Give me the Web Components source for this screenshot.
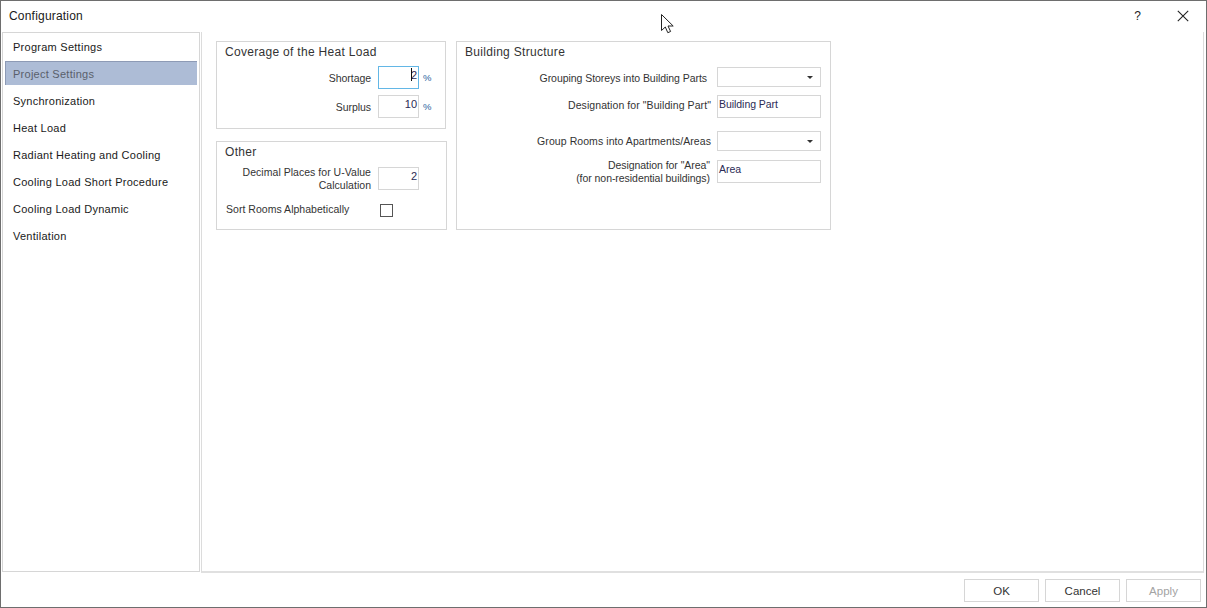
<!DOCTYPE html>
<html><head><meta charset="utf-8"><style>
html,body{margin:0;padding:0;background:#fff}
body{width:1207px;height:608px;overflow:hidden;font-family:"Liberation Sans",sans-serif}
</style></head><body>
<config-window></config-window>
<script>
const FONT='"Liberation Sans","Noto Sans",sans-serif';
function def(name,css,html){
  customElements.define(name,class extends HTMLElement{
    constructor(){super();const s=this.attachShadow({mode:'open'});
      s.innerHTML='<style>'+css+'</style>'+(typeof html==='function'?html(this):html);}
  });
}
def('nav-item',`:host{display:flex;align-items:center;height:24px;margin-bottom:3px;padding:1px 0 0 8px;font-size:11px;letter-spacing:.26px;color:#1a1a1a;box-sizing:border-box}
:host([selected]){background:#adbcd6;color:#5a5f6b;border-top:1px solid #8d9ab5;border-left:1px solid #8d9ab5;padding:0 0 0 7px}`,'<slot></slot>');
def('group-box',`:host{display:block;box-sizing:border-box;border:1px solid #d6d6d6}
.t{font-size:12px;letter-spacing:.3px;color:#333;line-height:16px;padding:2px 0 0 8px;height:18px;box-sizing:border-box}`,
  h=>'<div class="t">'+h.getAttribute('title-text')+'</div><slot></slot>');
def('form-row',`:host{display:grid;grid-template-rows:minmax(0,1fr);align-items:center;font-size:10.5px;letter-spacing:-.05px;color:#333;line-height:13px}
.l{text-align:right;white-space:pre-line;letter-spacing:var(--ls,-.05px);padding:var(--lt,0px) var(--lp,0px) var(--lb,0px) 0}`,
  h=>'<div class="l">'+h.getAttribute('label')+'</div><slot></slot>');
def('text-box',`:host{display:block;align-self:stretch;box-sizing:border-box;border:1px solid #d6d6d6;background:#fff;font-size:10.5px;letter-spacing:-.05px;line-height:13px;color:#2b2b55;padding:2px 1px;position:relative;overflow:hidden}
:host([num]){text-align:right;padding:2px 1px 0;font-size:11px}
:host([focus]){border-color:#63b7e6}
:host([focus])::after{content:"";position:absolute;right:6px;top:1px;width:1px;height:13px;background:#111}`,'<slot></slot>');
def('drop-box',`:host{display:flex;align-self:stretch;align-items:center;justify-content:flex-end;box-sizing:border-box;border:1px solid #d6d6d6;background:#fff;padding-right:7px}
i{display:block;width:0;height:0;border:3px solid transparent;border-top:3px solid #333;border-bottom:0}`,'<i></i>');
def('dlg-button',`:host{display:flex;align-items:center;justify-content:center;width:75px;height:23px;box-sizing:border-box;border:1px solid #d6d6d6;background:#fff;font-size:11.5px;color:#333}
:host([disabled]){color:#a3a3a3}`,'<slot></slot>');
def('config-window',`
:host{display:flex;flex-direction:column;width:1207px;height:608px;box-sizing:border-box;border:1px solid #6e6e6e;background:#fff;position:relative;color:#222;font-family:${FONT}}
.title{height:31px;flex:none;display:flex;align-items:center;padding:0 17px 1px 8px;box-sizing:border-box;font-size:12px;letter-spacing:.2px;color:#1a1a1a}
.title .s{flex:1}
.help{font-size:12px;margin-right:36px;color:#222}
.main{flex:1;display:flex;min-height:0;padding-left:1px}
.side{width:198px;flex:none;box-sizing:border-box;border:1px solid #d6d6d6;padding:1px 2px 0 2px;height:540px}
.content{margin-left:1px;flex:none;width:1003px;height:541px;box-sizing:border-box;border-left:1px solid #dcdcdc;border-right:1px solid #dcdcdc;border-bottom:2px solid #e0e0e0;padding:9px 0 0 14px;display:grid;grid-template-columns:231px 375px;column-gap:9px;grid-template-rows:88px 89px;row-gap:12px;align-content:start}
.b3{grid-row:1/3;grid-column:2}
.g1{width:230px}
.foot{height:34px;flex:none;display:flex;justify-content:flex-end;gap:6px;padding:6px 5px 0 0;box-sizing:border-box}
.cursor{position:absolute;left:659px;top:12px;width:14px;height:21px}
.x{width:12px;height:12px}
form-row{grid-template-columns:154px 41px auto;column-gap:7px}
.row{height:23px}
.pct{font-size:9.5px;color:#2a5f9e;margin-left:-3px}
.g1 .r1,.g1 .r2{margin-top:6px;--lt:2px}
.g2 .r1{margin-top:7px;--ls:.03px}
.sort{display:flex;align-items:center;height:13px;margin-top:14px;padding-left:9px;font-size:10.5px;letter-spacing:.03px;color:#333}
.sort span{width:154px;padding-bottom:4px}
.sort b{display:block;flex:none;width:13px;height:13px;box-sizing:border-box;border:1px solid #555;background:#fff}
.s3{grid-template-columns:254px 104px;column-gap:6px}
`,`
<div class="title"><span>Configuration</span><span class="s"></span><span class="help">?</span>
<svg class="x" viewBox="0 0 12 12"><path d="M.8.8 11.2 11.2M11.2.8.8 11.2" stroke="#222" stroke-width="1.1" fill="none"/></svg></div>
<div class="main">
 <div class="side">
  <nav-item>Program Settings</nav-item><nav-item selected>Project Settings</nav-item><nav-item>Synchronization</nav-item><nav-item>Heat Load</nav-item><nav-item>Radiant Heating and Cooling</nav-item><nav-item>Cooling Load Short Procedure</nav-item><nav-item>Cooling Load Dynamic</nav-item><nav-item>Ventilation</nav-item>
 </div>
 <div class="content">
  <group-box class="g1" title-text="Coverage of the Heat Load">
   <form-row class="row r1" label="Shortage"><text-box num focus>2</text-box><span class="pct">%</span></form-row>
   <form-row class="row r2" label="Surplus"><text-box num>10</text-box><span class="pct">%</span></form-row>
  </group-box>
  <group-box class="g2" title-text="Other">
   <form-row class="row r1" label="Decimal Places for U-Value&#10;Calculation"><text-box num>2</text-box></form-row>
   <div class="sort"><span>Sort Rooms Alphabetically</span><b></b></div>
  </group-box>
  <group-box class="b3" title-text="Building Structure">
   <form-row class="s3" style="height:20px;margin-top:7px;--lp:4px;--lt:2px" label="Grouping Storeys into Building Parts"><drop-box></drop-box></form-row>
   <form-row class="s3" style="height:23px;margin-top:8px;--lb:2px;--ls:.08px" label="Designation for &quot;Building Part&quot;"><text-box>Building Part</text-box></form-row>
   <form-row class="s3" style="height:20px;margin-top:13px;--ls:.07px" label="Group Rooms into Apartments/Areas"><drop-box></drop-box></form-row>
   <form-row class="s3" style="height:23px;margin-top:9px;--lp:1px" label="Designation for &quot;Area&quot;&#10;(for non-residential buildings)"><text-box>Area</text-box></form-row>
  </group-box>
 </div>
</div>
<div class="foot"><dlg-button>OK</dlg-button><dlg-button>Cancel</dlg-button><dlg-button disabled>Apply</dlg-button></div>
<svg class="cursor" viewBox="0 0 14 21"><path d="M1.5 1.5V17.5L5.3 14 7.8 19.7 10.6 18.5 8 13H13.2Z" fill="#fff" stroke="#222" stroke-width="1"/></svg>
`);
</script>
</body></html>
